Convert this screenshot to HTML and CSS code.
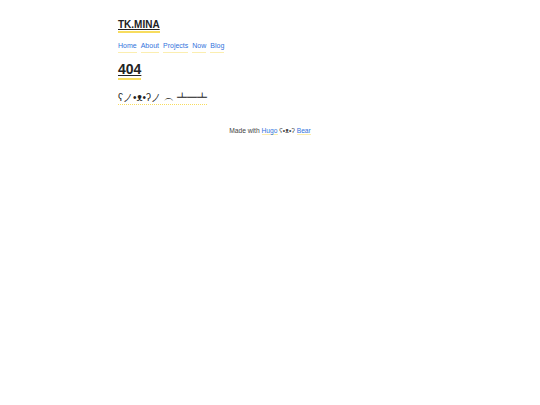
FILE: index.html
```html
<!DOCTYPE html>
<html>
<head>
<meta charset="utf-8">
<link rel="stylesheet" href="styles.css">
</head>
<body>
<div class="page">
  <header class="header">
    <a class="title" href="#">TK.MINA</a>
    <nav class="nav">
      <a href="#">Home</a>
      <a href="#">About</a>
      <a href="#">Projects</a>
      <a href="#">Now</a>
      <a href="#">Blog</a>
    </nav>
  </header>
  <main class="main">
    <h1 class="heading">404</h1>
    <p class="kaomoji">ʕノ•ᴥ•ʔノ ︵ ┻━┻</p>
  </main>
  <footer class="footer">Made with <a href="#">Hugo</a> ʕ•ᴥ•ʔ <a href="#">Bear</a></footer>
</div>
</body>
</html>
```
FILE: styles.css
```css
html, body {
  margin: 0;
  padding: 0;
  background: #fff;
}
body {
  font-family: "Liberation Sans", Arial, sans-serif;
  font-size: 7px;
  line-height: 1.5;
  color: #444;
}
.page {
  width: 304px;
  margin: 0 auto;
  padding-top: 18px;
}
a {
  color: #3273dc;
  text-decoration: none;
  border-bottom: 1px solid #fbeeb0;
}
.header,
.main {
  display: flex;
  flex-direction: column;
  align-items: flex-start;
}
.title {
  font-size: 10px;
  font-weight: bold;
  color: #222;
  text-decoration: underline;
  text-decoration-thickness: 1px;
  text-underline-offset: 1px;
  border-bottom: 2px solid #f7dc5e;
  line-height: 13px;
}
.nav {
  margin-top: 8px;
  display: flex;
  gap: 4px;
}
.main {
  margin-top: 8px;
}
.heading {
  margin: 0;
  font-size: 14px;
  font-weight: bold;
  color: #222;
  line-height: 17px;
  text-decoration: underline;
  text-decoration-thickness: 1px;
  text-underline-offset: 1px;
  border-bottom: 2px solid #f7dc5e;
}
.kaomoji {
  margin: 12px 0 0;
  font-size: 10px;
  color: #222;
  border-bottom: 1px dotted #f7dc5e;
  line-height: 12px;
}
.footer {
  margin-top: 21px;
  text-align: center;
  font-size: 6.7px;
}
```
